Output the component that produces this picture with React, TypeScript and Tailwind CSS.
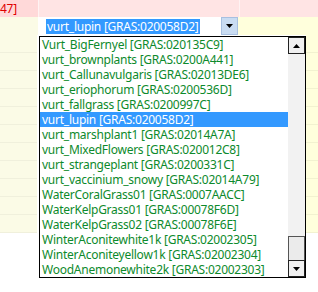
const items = [
  'Vurt_BigFernyel [GRAS:020135C9]',
  'vurt_brownplants [GRAS:0200A441]',
  'vurt_Callunavulgaris [GRAS:02013DE6]',
  'vurt_eriophorum [GRAS:0200536D]',
  'vurt_fallgrass [GRAS:0200997C]',
  'vurt_lupin [GRAS:020058D2]',
  'vurt_marshplant1 [GRAS:02014A7A]',
  'vurt_MixedFlowers [GRAS:020012C8]',
  'vurt_strangeplant [GRAS:0200331C]',
  'vurt_vaccinium_snowy [GRAS:02014A79]',
  'WaterCoralGrass01 [GRAS:0007AACC]',
  'WaterKelpGrass01 [GRAS:00078F6D]',
  'WaterKelpGrass02 [GRAS:00078F6E]',
  'WinterAconitewhite1k [GRAS:02002305]',
  'WinterAconiteyellow1k [GRAS:02002304]',
  'WoodAnemonewhite2k [GRAS:02002303]',
];
const selected = 5;
const rows = Array.from({ length: 11 });

function Tri({ up }: { up?: boolean }) {
  return (
    <svg width="7" height="4" viewBox="0 0 7 4">
      <path d={up ? 'M0 4 L3.5 0 L7 4 Z' : 'M0 0 L7 0 L3.5 4 Z'} fill="#000" />
    </svg>
  );
}

export default function App() {
  return (
    <div className="relative w-[318px] h-[292px] overflow-hidden bg-white text-[12px] leading-[15px] tracking-[-0.25px]" style={{ fontFamily: '"Noto Sans", sans-serif' }}>
      {/* header row */}
      <div className="flex h-[17px]">
        <div className="w-[38px] bg-[#ffd9d9] text-[#e00000] pt-[1px] overflow-hidden whitespace-nowrap">47]</div>
        <div className="w-px bg-[#fff3f3]" />
        <div className="w-[200px] bg-[#ffe4e4]" />
        <div className="w-px bg-[#fff3f3]" />
        <div className="flex-1 bg-[#ffe4e4]" />
      </div>
      {/* combo row */}
      <div className="flex h-[18px]">
        <div className="w-[38px] bg-[#fbfbe6]" />
        <div className="w-[183px] bg-white flex items-center pl-[8px]">
          <span className="bg-[#3399ff] text-white px-px whitespace-nowrap">vurt_lupin [GRAS:020058D2]</span>
        </div>
        <div className="w-[17px] bg-[#c9dcf2] border border-[#a8c0e0] flex items-center justify-center">
          <Tri />
        </div>
        <div className="flex-1 bg-[#ffffdc]" />
      </div>
      {/* grid rows */}
      {rows.map((_, i) => (
        <div key={i} className="flex h-[18px]">
          <div className="w-[37px] bg-[#fbfbe6] border-b border-[#f0f0dc]" />
          <div className="flex-1" />
          <div className="w-[12px] bg-[#ffffdc] border-b border-[#f2f2d0]" />
        </div>
      ))}

      {/* dropdown list */}
      <div className="absolute left-[39px] top-[36px] w-[267px] h-[242px] border border-black bg-white flex">
        <div className="flex-1 overflow-hidden">
          {items.map((t, i) => (
            <div
              key={t}
              className={
                'h-[15px] pl-[2px] whitespace-nowrap ' +
                (i === selected ? 'bg-[#3399ff] text-white' : 'text-[#0d8a2c]')
              }
            >
              {t}
            </div>
          ))}
        </div>
        <div className="w-[17px] flex flex-col bg-[#f2f2f2]">
          <div className="h-[17px] bg-[#f0f0f0] border border-[#222] flex items-center justify-center">
            <Tri up />
          </div>
          <div className="flex-1" />
          <div className="h-[24px] bg-[#ebebeb] border border-b-0 border-[#555]" />
          <div className="h-[17px] bg-[#f0f0f0] border border-[#222] flex items-center justify-center">
            <Tri />
          </div>
        </div>
      </div>
    </div>
  );
}
